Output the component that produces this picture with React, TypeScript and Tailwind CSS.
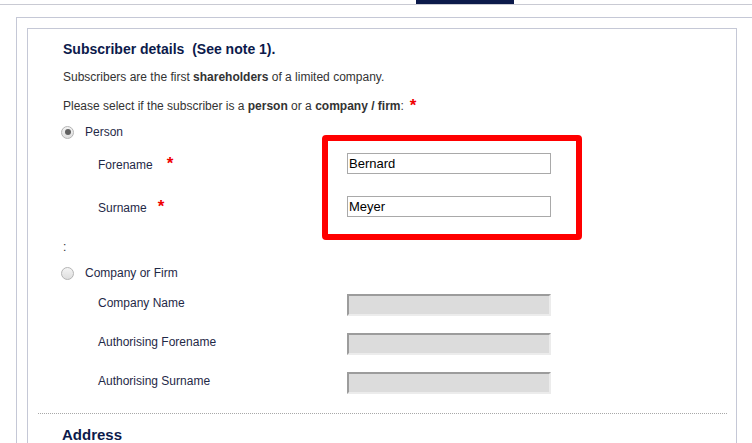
import React from 'react';

const font = { fontFamily: '"Liberation Sans", Arial, sans-serif' };

function Radio({ checked }: { checked?: boolean }) {
  return (
    <span className="flex h-[13px] w-[13px] items-center justify-center rounded-full border border-[#b4b4b4] bg-gradient-to-b from-[#f4f4f4] to-[#dedede]">
      {checked && <span className="h-[6px] w-[6px] rounded-full bg-[#606060]" />}
    </span>
  );
}

function Star() {
  return <span className="text-[17px] font-bold leading-[14px] text-[#f00000]">*</span>;
}

export default function App() {
  const companyRows = ['Company Name', 'Authorising Forename', 'Authorising Surname'];

  return (
    <div className="relative h-[443px] w-[752px] overflow-hidden bg-white text-[#333]" style={font}>
      {/* Top tab strip */}
      <div className="flex h-[5px] border-b border-[#c9cad3]">
        <div className="ml-[416px] h-[4px] w-[98px] bg-[#0c1a4b]" />
      </div>

      {/* Outer panel */}
      <div className="ml-[16px] mt-[12px] w-[760px] border-l border-t border-[#c5c8d6] pl-[10px] pt-[10px]">
        {/* Inner panel */}
        <div className="h-[420px] w-[710px] border border-[#c5c8d6]">
          <div className="pl-[35px] pt-[12px]">
            <h2 className="text-[14px] font-bold leading-[17px] text-[#0c1a4b]">
              Subscriber details&nbsp; (See note 1).
            </h2>
            <p className="mt-[12px] text-[12px] leading-[14px]">
              Subscribers are the first <b>shareholders</b> of a limited company.
            </p>
            <p className="mt-[15px] flex h-[14px] items-center gap-[6px] text-[12px] leading-[14px]">
              <span>
                Please select if the subscriber is a <b>person</b> or a <b>company / firm</b>:
              </span>
              <Star />
            </p>

            <label className="mt-[12px] flex h-[14px] items-center text-[12px] text-[#1f2947]">
              <span className="ml-[-2px]">
                <Radio checked />
              </span>
              <span className="ml-[11px]">Person</span>
            </label>

            <div className="mt-[14px] flex h-[21px] items-center">
              <span className="ml-[35px] flex w-[249px] items-center pt-[3px] text-[12px] text-[#1f2947]">
                Forename<span className="ml-[14px]"><Star /></span>
              </span>
              <input
                readOnly
                value="Bernard"
                className="h-[21px] w-[204px] border border-[#a9a9a9] bg-white px-[1px] text-[13px] text-black outline-none"
              />
            </div>
            <div className="mt-[22px] flex h-[21px] items-center">
              <span className="ml-[35px] flex w-[249px] items-center pt-[3px] text-[12px] text-[#1f2947]">
                Surname<span className="ml-[11px]"><Star /></span>
              </span>
              <input
                readOnly
                value="Meyer"
                className="h-[21px] w-[204px] border border-[#a9a9a9] bg-white px-[1px] text-[13px] text-black outline-none"
              />
            </div>

            <p className="mt-[23px] h-[14px] text-[12px] leading-[14px] text-[#333]">:</p>

            <label className="mt-[12px] flex h-[14px] items-center text-[12px] text-[#1f2947]">
              <span className="ml-[-2px]">
                <Radio />
              </span>
              <span className="ml-[11px]">Company or Firm</span>
            </label>

            {companyRows.map((label, i) => (
              <div key={label} className={`flex h-[22px] items-center ${i === 0 ? 'mt-[14px]' : 'mt-[17px]'}`}>
                <span className="ml-[35px] w-[249px] pb-[4px] text-[12px] text-[#1f2947]">{label}</span>
                <input
                  readOnly
                  disabled
                  className="h-[22px] w-[204px] border-2 border-b-[#ececec] border-l-[#9c9c9c] border-r-[#ececec] border-t-[#9c9c9c] bg-[#dcdcdc]"
                />
              </div>
            ))}
          </div>

          <div className="ml-[10px] mr-[9px] mt-[19px] border-t border-dotted border-[#a8a8a8]" />
          <h2 className="ml-[34px] mt-[12px] text-[15px] font-bold leading-[18px] text-[#0c1a4b]">Address</h2>
        </div>
      </div>

      {/* Highlight annotation */}
      <div className="absolute left-[322px] top-[135px] h-[105px] w-[260px] rounded-[4px] border-[6px] border-[#ff0000]" />
    </div>
  );
}
